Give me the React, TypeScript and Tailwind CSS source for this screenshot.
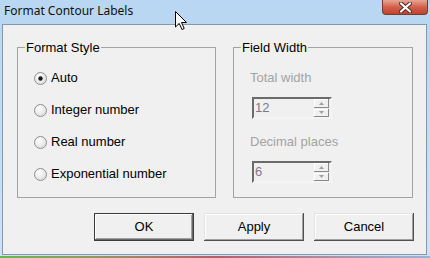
import React from "react";

function Radio({ checked }: { checked?: boolean }) {
  return (
    <svg width="13" height="13" viewBox="0 0 13 13" className="shrink-0">
      <defs>
        <radialGradient id="rg" cx="40%" cy="35%" r="70%">
          <stop offset="0%" stopColor="#ffffff" />
          <stop offset="100%" stopColor="#dcdcdc" />
        </radialGradient>
      </defs>
      <circle cx="6.5" cy="6.5" r="6" fill="url(#rg)" stroke="#8f8f8f" strokeWidth="1" />
      {checked && <circle cx="6.5" cy="6.5" r="2.2" fill="#1a1a1a" />}
    </svg>
  );
}

function RadioRow({ label, checked }: { label: string; checked?: boolean }) {
  return (
    <div className="h-[32px] flex items-center gap-[4px]">
      <Radio checked={checked} />
      <span>{label}</span>
    </div>
  );
}

function SpinEdit({ value }: { value: string }) {
  return (
    <div className="ml-[2px] w-[80px] h-[22px] flex border-2 border-t-[#6b6b6b] border-l-[#6b6b6b] border-b-[#f4f4f4] border-r-[#f4f4f4] bg-[#f0f0f0]">
      <div className="flex-1 pl-[1px] text-[#7a7a86] leading-[18px]">{value}</div>
      <div className="w-[16px] flex flex-col gap-[1px] pr-[1px]">
        {[0, 1].map((i) => (
          <div
            key={i}
            className="flex-1 flex items-center justify-center bg-[#f0f0f0] shadow-[inset_-1px_-1px_0_#8a8a8a,inset_1px_1px_0_#ffffff]"
          >
            <svg width="5" height="3" viewBox="0 0 5 3">
              {i === 0 ? (
                <path d="M2.5 0 L5 3 L0 3 Z" fill="#a0a0a0" />
              ) : (
                <path d="M0 0 L5 0 L2.5 3 Z" fill="#a0a0a0" />
              )}
            </svg>
          </div>
        ))}
      </div>
    </div>
  );
}

function Button({ label, isDefault }: { label: string; isDefault?: boolean }) {
  return (
    <button
      className={`w-[100px] h-[28px] bg-[#f0f0f0] text-black ${
        isDefault
          ? "border border-[#3c3c3c] shadow-[inset_-1px_-1px_0_#696969,inset_1px_1px_0_#ffffff,inset_-2px_-2px_0_#a0a0a0]"
          : "shadow-[inset_-1px_-1px_0_#505050,inset_1px_1px_0_#e3e3e3,inset_-2px_-2px_0_#a0a0a0,inset_2px_2px_0_#ffffff]"
      }`}
    >
      {label}
    </button>
  );
}

export default function App() {
  return (
    <div className="w-[430px] h-[258px] overflow-hidden relative bg-gradient-to-r from-[#5dbb4e] via-[#b85a6a] to-[#8fb7d8] font-['Liberation_Sans',Arial,sans-serif] text-[13px] text-black">
      <div className="h-[256px] flex flex-col bg-gradient-to-b from-[#b9d6f2] to-[#cce2f7]">
        {/* Title bar */}
        <div className="h-[24px] flex justify-between items-start">
          <span className="pl-[4px] pt-[2px] font-['Noto_Sans',sans-serif] text-[12px] text-[#101010]">
            Format Contour Labels
          </span>
          <div className="mr-[2px] w-[46px] h-[15px] rounded-b-[4px] border border-t-0 border-[#7b3a30] bg-gradient-to-b from-[#e7a595] via-[#d2604c] to-[#c2412b] flex items-center justify-center">
            <svg width="13" height="11" viewBox="0 0 13 11">
              <path
                d="M2 1.5 L11 9.5 M11 1.5 L2 9.5"
                stroke="#4b2a26"
                strokeWidth="4"
                strokeLinecap="round"
              />
              <path d="M2 1.5 L11 9.5 M11 1.5 L2 9.5" stroke="#ffffff" strokeWidth="2.2" strokeLinecap="round" />
            </svg>
          </div>
        </div>

        {/* Client area */}
        <div className="flex-1 ml-[2px] mr-[3px] mb-[1px] border border-[#8497ab] bg-[#f0f0f0] flex flex-col">
          <div className="flex pl-[14px] pt-[15px] gap-[17px]">
            <fieldset className="w-[199px] h-[158px] border border-[#a3a3a3]">
              <legend className="ml-[7px] px-[1px] leading-[15px]">Format Style</legend>
              <div className="pl-[16px] pt-[7px] flex flex-col">
                <RadioRow label="Auto" checked />
                <RadioRow label="Integer number" />
                <RadioRow label="Real number" />
                <RadioRow label="Exponential number" />
              </div>
            </fieldset>

            <fieldset className="w-[180px] h-[158px] border border-[#a3a3a3]">
              <legend className="ml-[7px] px-[1px] leading-[15px]">Field Width</legend>
              <div className="pl-[16px] pt-[15px] flex flex-col text-[#a3a3a3]">
                <span className="leading-[15px]">Total width</span>
                <div className="mt-[12px]">
                  <SpinEdit value="12" />
                </div>
                <span className="mt-[15px] leading-[15px]">Decimal places</span>
                <div className="mt-[12px]">
                  <SpinEdit value="6" />
                </div>
              </div>
            </fieldset>
          </div>

          <div className="flex justify-end gap-[10px] pr-[12px] mt-[15px]">
            <Button label="OK" isDefault />
            <Button label="Apply" />
            <Button label="Cancel" />
          </div>
        </div>
      </div>

      {/* Mouse cursor */}
      <svg className="absolute left-[175px] top-[11px]" width="13" height="20" viewBox="0 0 13 20">
        <path
          d="M0.5 0.5 L0.5 16 L4.2 12.4 L7 18.5 L9.2 17.5 L6.5 11.5 L11.5 11.5 Z"
          fill="#ffffff"
          stroke="#000000"
          strokeWidth="1"
          strokeLinejoin="round"
        />
      </svg>
    </div>
  );
}
